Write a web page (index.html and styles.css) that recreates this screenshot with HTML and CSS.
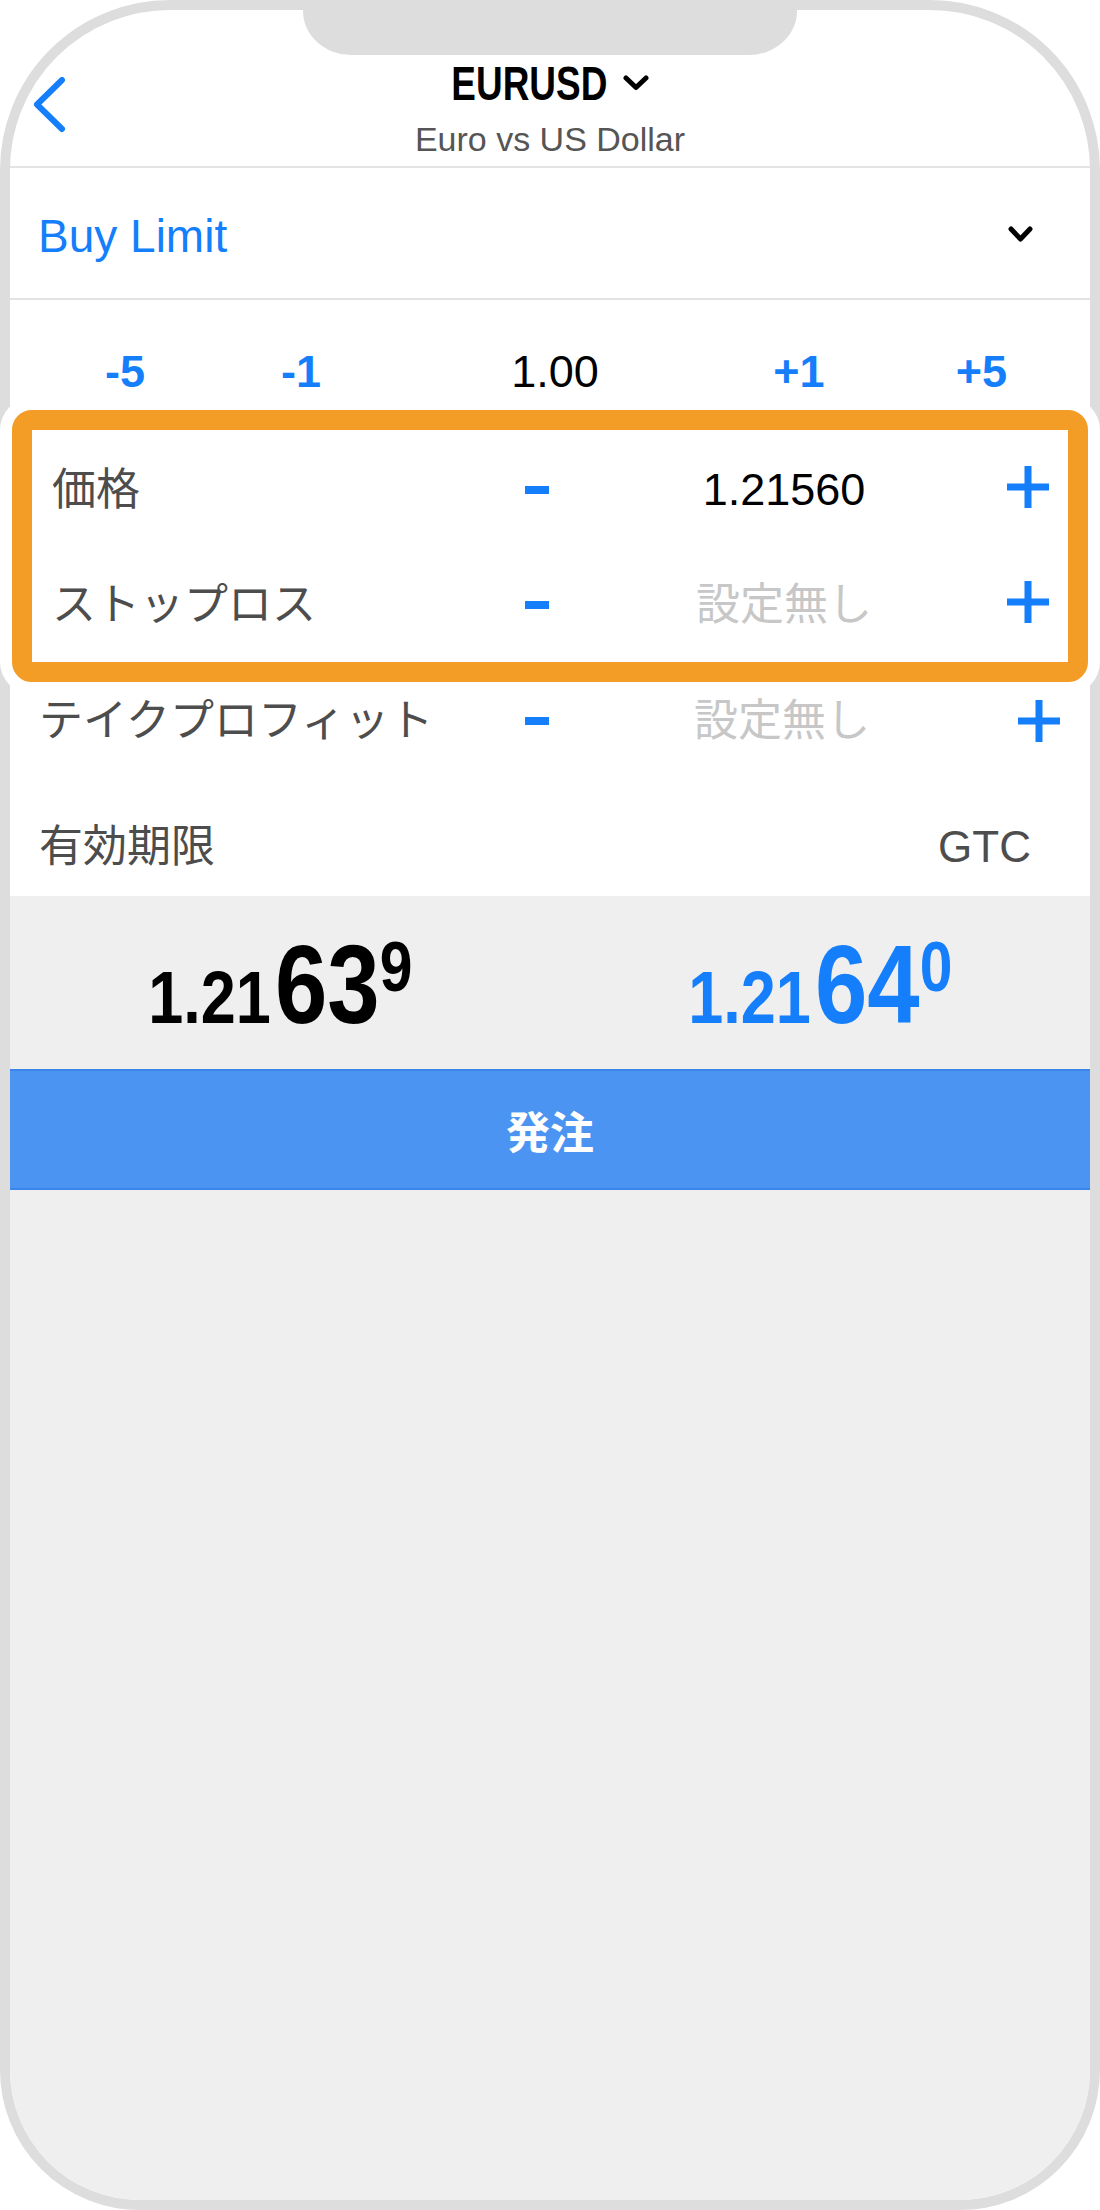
FILE: index.html
```html
<!DOCTYPE html>
<html lang="ja">

<head>
    <meta charset="UTF-8" />
    <meta name="viewport" content="width=device-width, initial-scale=1.0" />
    <title>EURUSD 注文</title>
    <link rel="stylesheet" href="styles.css">
</head>

<body>
    <div class="phone">
        <div class="notch"></div>

        <header class="topbar">
            <a class="back" href="#" title="戻る">
                <svg width="34" height="56" viewBox="0 0 34 56">
                    <path d="M29 3 L4 27.5 L29 52" fill="none" stroke="#157efb" stroke-width="6"
                        stroke-linecap="round" stroke-linejoin="round" />
                </svg>
            </a>
            <div class="instrument">
                <div class="symbol-row">
                    <span class="symbol">EURUSD</span>
                    <svg class="symbol-caret" width="26" height="16" viewBox="0 0 26 16">
                        <path d="M3 3 L13 12.5 L23 3" fill="none" stroke="#000" stroke-width="5"
                            stroke-linecap="round" stroke-linejoin="round" />
                    </svg>
                </div>
                <div class="subtitle">Euro vs US Dollar</div>
            </div>
        </header>

        <div class="order-type">
            <span>Buy Limit</span>
            <svg width="25" height="17" viewBox="0 0 25 17">
                <path d="M3 3 L12.5 13 L22 3" fill="none" stroke="#000" stroke-width="5"
                    stroke-linecap="round" stroke-linejoin="round" />
            </svg>
        </div>

        <div class="lots">
            <span class="step">-5</span>
            <span class="step">-1</span>
            <span class="volume">1.00</span>
            <span class="step">+1</span>
            <span class="step last">+5</span>
        </div>

        <!-- 強調枠: 価格 / ストップロス -->
        <div class="highlight">
            <div class="field in-box">
                <span class="label">価格</span>
                <span class="minus"></span>
                <span class="value">1.21560</span>
                <svg class="plus" width="42" height="42" viewBox="0 0 42 42">
                    <path d="M21 0 V42 M0 21 H42" stroke="#157efb" stroke-width="7" />
                </svg>
            </div>
            <div class="field in-box">
                <span class="label">ストップロス</span>
                <span class="minus"></span>
                <span class="value empty">設定無し</span>
                <svg class="plus" width="42" height="42" viewBox="0 0 42 42">
                    <path d="M21 0 V42 M0 21 H42" stroke="#157efb" stroke-width="7" />
                </svg>
            </div>
        </div>

        <div class="field take-profit">
            <span class="label">テイクプロフィット</span>
            <span class="minus"></span>
            <span class="value empty">設定無し</span>
            <svg class="plus" width="42" height="42" viewBox="0 0 42 42">
                <path d="M21 0 V42 M0 21 H42" stroke="#157efb" stroke-width="7" />
            </svg>
        </div>

        <div class="expiry">
            <span class="label">有効期限</span>
            <span class="expiry-value">GTC</span>
        </div>

        <div class="quotes">
            <div class="quote-cell">
                <span class="quote bid"><span class="q-small">1.21</span><span class="q-big">63</span><span class="q-sup">9</span></span>
            </div>
            <div class="quote-cell">
                <span class="quote ask"><span class="q-small">1.21</span><span class="q-big">64</span><span class="q-sup">0</span></span>
            </div>
        </div>

        <button class="submit">発注</button>

        <div class="rest"></div>
    </div>
</body>

</html>
```

FILE: styles.css
```css
:root {
    --blue: #157efb;
    --frame: #dddddd;
    --text: #4d4d4d;
    --muted: #c7c7c7;
    --line: #e3e3e3;
    --panel: #efefef;
    --orange: #f39c26;
    --button: #4b94f2;
}

* {
    box-sizing: border-box;
}

html,
body {
    margin: 0;
    background: #fff;
}

body {
    font-family: "Liberation Sans", "Noto Sans CJK JP", sans-serif;
    color: var(--text);
}

.phone {
    position: relative;
    width: 1100px;
    height: 2210px;
    border: 10px solid var(--frame);
    border-radius: 170px 170px 140px 140px;
    background: #fff;
    display: flex;
    flex-direction: column;
}

.notch {
    position: absolute;
    top: -10px;
    left: 293px;
    width: 494px;
    height: 55px;
    background: var(--frame);
    border-radius: 0 0 48px 48px / 0 0 44px 44px;
}

/* ヘッダー */
.topbar {
    display: grid;
    grid-template-columns: 100px 1fr 100px;
    height: 158px;
    border-bottom: 2px solid var(--line);
}

.back {
    padding: 67px 0 0 23px;
}

.back svg {
    display: block;
}

.instrument {
    padding-top: 50px;
    text-align: center;
}

.symbol-row {
    display: flex;
    justify-content: center;
    align-items: flex-start;
    gap: 15px;
    height: 47px;
}

.symbol {
    display: inline-block;
    font-size: 48px;
    line-height: 48px;
    font-weight: bold;
    color: #000;
    transform: scaleX(0.77);
    margin: 0 -23px;
}

.symbol-caret {
    margin-top: 15px;
}

.subtitle {
    margin-top: 15px;
    font-size: 34px;
    line-height: 34px;
    color: #555;
}

/* 注文タイプ */
.order-type {
    height: 132px;
    border-bottom: 2px solid var(--line);
    display: flex;
    align-items: center;
    justify-content: space-between;
    padding: 6px 57px 0 28px;
    font-size: 46px;
    line-height: 46px;
    color: var(--blue);
}

.order-type svg {
    margin-top: -4px;
}

/* ロット */
.lots {
    height: 110px;
    padding: 32px 83px 0 0;
    display: grid;
    grid-template-columns: 230px 122px 386px 102px 1fr;
    align-items: center;
    font-size: 45px;
    line-height: 45px;
    text-align: center;
}

.step {
    color: var(--blue);
    font-weight: bold;
}

.step.last {
    text-align: right;
}

.volume {
    color: #000;
}

/* 強調枠 */
.highlight {
    height: 272px;
    margin: 0 2px;
    padding-top: 2px;
    border: 20px solid var(--orange);
    border-radius: 20px;
    background: #fff;
    box-shadow: 0 0 0 12px #fff;
}

.field {
    display: grid;
    align-items: center;
    font-size: 44px;
    line-height: 44px;
}

.field.in-box {
    height: 115px;
    grid-template-columns: 455px 60px 434px 54px;
    padding: 0 13px 0 20px;
}

.field.take-profit {
    height: 78px;
    grid-template-columns: 468px 60px 430px 84px;
    padding: 0 9px 0 29px;
}

.label {
    color: var(--text);
    white-space: nowrap;
}

.minus {
    justify-self: center;
    width: 24px;
    height: 8px;
    background: var(--blue);
}

.value {
    text-align: center;
    font-size: 45px;
    color: #000;
}

.value.empty {
    font-size: 44px;
    color: var(--muted);
}

.plus {
    justify-self: center;
}

.in-box .plus {
    margin-top: -6px;
}

/* 有効期限 */
.expiry {
    height: 136px;
    padding: 38px 59px 0 29px;
    display: flex;
    align-items: center;
    justify-content: space-between;
    font-size: 44px;
    line-height: 44px;
}

.expiry-value {
    color: var(--text);
}

/* レート */
.quotes {
    height: 173px;
    padding-top: 33px;
    background: var(--panel);
    display: grid;
    grid-template-columns: 1fr 1fr;
}

.quote-cell {
    text-align: center;
}

.quote {
    display: inline-block;
    font-weight: bold;
    font-size: 112px;
    line-height: 112px;
    transform: scaleX(0.84);
}

.quote span {
    line-height: 0;
}

.quote.bid {
    color: #000;
}

.quote.ask {
    color: var(--blue);
}

.q-small {
    font-size: 75px;
}

.q-big {
    font-size: 112px;
    margin-left: 5px;
}

.q-sup {
    font-size: 70px;
    vertical-align: 32px;
}

/* 発注ボタン */
.submit {
    height: 121px;
    border: none;
    border-top: 2px solid #3b86ea;
    border-bottom: 2px solid #3b86ea;
    background: var(--button);
    color: #fff;
    font-family: "Noto Sans CJK JP", sans-serif;
    font-weight: bold;
    font-size: 44px;
    padding: 0;
    cursor: pointer;
}

.rest {
    flex: 1;
    background: var(--panel);
    border-radius: 0 0 130px 130px;
}
```
